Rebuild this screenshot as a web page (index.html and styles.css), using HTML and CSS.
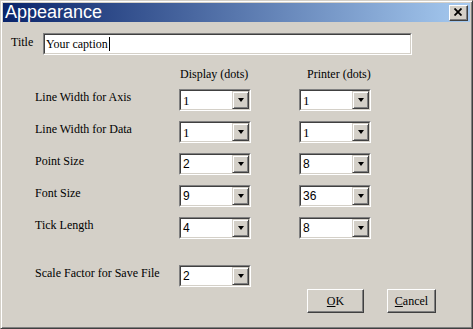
FILE: index.html
```html
<!DOCTYPE html>
<html lang="en">
<head>
    <meta charset="UTF-8">
    <title>Appearance</title>
    <link rel="stylesheet" href="styles.css">
</head>
<body>
    <div class="window">
        <div class="titlebar">
            <span class="caption">Appearance</span>
            <span class="close">
                <svg width="8" height="8" viewBox="0 0 8 8">
                    <path d="M0.5 0.5 L7.5 7.5 M7.5 0.5 L0.5 7.5" stroke="#000" stroke-width="1.8" fill="none"/>
                </svg>
            </span>
        </div>

        <div class="content">
            <div class="title-row">
                <label>Title</label>
                <div class="field">
                    <div class="field-in">Your caption<span class="caret"></span></div>
                </div>
            </div>

            <div class="grid">
                <div></div>
                <div class="head display">Display (dots)</div>
                <div></div>
                <div class="head printer">Printer (dots)</div>

                <div class="lbl">Line Width for Axis</div>
                <div class="combo"><div class="combo-in"><span class="val serif">1</span><span class="drop"><i></i></span></div></div>
                <div></div>
                <div class="combo"><div class="combo-in"><span class="val serif">1</span><span class="drop"><i></i></span></div></div>

                <div class="lbl">Line Width for Data</div>
                <div class="combo"><div class="combo-in"><span class="val serif">1</span><span class="drop"><i></i></span></div></div>
                <div></div>
                <div class="combo"><div class="combo-in"><span class="val serif">1</span><span class="drop"><i></i></span></div></div>

                <div class="lbl">Point Size</div>
                <div class="combo"><div class="combo-in"><span class="val">2</span><span class="drop"><i></i></span></div></div>
                <div></div>
                <div class="combo"><div class="combo-in"><span class="val">8</span><span class="drop"><i></i></span></div></div>

                <div class="lbl">Font Size</div>
                <div class="combo"><div class="combo-in"><span class="val">9</span><span class="drop"><i></i></span></div></div>
                <div></div>
                <div class="combo"><div class="combo-in"><span class="val">36</span><span class="drop"><i></i></span></div></div>

                <div class="lbl">Tick Length</div>
                <div class="combo"><div class="combo-in"><span class="val">4</span><span class="drop"><i></i></span></div></div>
                <div></div>
                <div class="combo"><div class="combo-in"><span class="val">8</span><span class="drop"><i></i></span></div></div>

                <div class="lbl scale">Scale Factor for Save File</div>
                <div class="combo scale"><div class="combo-in"><span class="val">2</span><span class="drop"><i></i></span></div></div>
            </div>

            <div class="buttons">
                <button class="btn ok"><u>O</u>K</button>
                <button class="btn cancel"><u>C</u>ancel</button>
            </div>
        </div>
    </div>
</body>
</html>
```

FILE: styles.css
```css
body {
    margin: 0;
    background: #d4d0c8;
    font-family: "Liberation Serif", "Times New Roman", serif;
    font-size: 12px;
    color: #000;
}
.window {
    width: 473px;
    height: 329px;
    box-sizing: border-box;
    border: 1px solid;
    border-color: #d4d0c8 #404040 #404040 #d4d0c8;
    box-shadow: inset 1px 1px #fff, inset -1px -1px #808080;
    padding: 2px;
    background: #d4d0c8;
}
.titlebar {
    height: 19px;
    display: flex;
    align-items: center;
    justify-content: space-between;
    padding: 0 2px 0 2px;
    background: linear-gradient(to right, #0a246a, #a6caf0);
}
.caption {
    font-family: "Liberation Sans", Arial, sans-serif;
    font-size: 18px;
    line-height: 19px;
    color: #fff;
}
.close {
    width: 19px;
    height: 16px;
    box-sizing: border-box;
    display: flex;
    align-items: center;
    justify-content: center;
    background: #d4d0c8;
    border: 1px solid;
    border-color: #fff #404040 #404040 #fff;
    box-shadow: inset -1px -1px #808080;
    padding: 0 1px 1px 0;
}
.close svg {
    display: block;
}
.content {
    padding: 11px 0 0 8px;
}
.title-row {
    display: flex;
    align-items: flex-start;
}
.title-row label {
    width: 32px;
    line-height: 14px;
    padding-top: 2px;
}
.field {
    width: 369px;
    height: 22px;
    box-sizing: border-box;
    border: 1px solid;
    border-color: #808080 #fff #fff #808080;
}
.field-in {
    height: 100%;
    box-sizing: border-box;
    border: 1px solid;
    border-color: #404040 #d4d0c8 #d4d0c8 #404040;
    background: #fff;
    padding-left: 1px;
    line-height: 18px;
    display: flex;
    align-items: center;
}
.caret {
    display: inline-block;
    width: 1px;
    height: 14px;
    background: #000;
    margin-left: 1px;
}
.grid {
    display: grid;
    grid-template-columns: 144px 72px 48px 72px;
    grid-template-rows: 12px repeat(5, 22px) 38px;
    row-gap: 10px;
    margin: 12px 0 0 24px;
}
.head {
    line-height: 14px;
    white-space: nowrap;
}
.display {
    padding-left: 1px;
}
.printer {
    padding-left: 8px;
}
.lbl {
    line-height: 14px;
    padding-top: 1px;
    white-space: nowrap;
}
.lbl.scale {
    align-self: end;
    height: 22px;
    box-sizing: border-box;
}
.combo {
    height: 22px;
    box-sizing: border-box;
    border: 1px solid;
    border-color: #808080 #fff #fff #808080;
}
.combo.scale {
    align-self: end;
}
.combo-in {
    height: 100%;
    box-sizing: border-box;
    border: 1px solid;
    border-color: #404040 #d4d0c8 #d4d0c8 #404040;
    background: #fff;
    display: flex;
}
.val {
    flex: 1;
    padding-left: 2px;
    line-height: 19px;
    font-family: "Liberation Sans", Arial, sans-serif;
    font-size: 12px;
}
.val.serif {
    font-family: "Liberation Serif", "Times New Roman", serif;
    font-size: 13px;
}
.drop {
    width: 17px;
    box-sizing: border-box;
    background: #d4d0c8;
    border: 1px solid;
    border-color: #d4d0c8 #404040 #404040 #d4d0c8;
    box-shadow: inset 1px 1px #fff, inset -1px -1px #808080;
    display: flex;
    align-items: center;
    justify-content: center;
}
.drop i {
    width: 0;
    height: 0;
    border-left: 3.5px solid transparent;
    border-right: 3.5px solid transparent;
    border-top: 4px solid #000;
}
.buttons {
    display: flex;
    justify-content: flex-end;
    gap: 23px;
    margin: 2px 34px 0 0;
}
.btn {
    height: 24px;
    box-sizing: border-box;
    font-family: "Liberation Serif", "Times New Roman", serif;
    font-size: 12px;
    background: #d4d0c8;
    color: #000;
    border: 1px solid;
    border-color: #fff #404040 #404040 #fff;
    box-shadow: inset -1px -1px #808080;
    padding: 0;
}
.ok {
    width: 57px;
}
.cancel {
    width: 49px;
}
```
